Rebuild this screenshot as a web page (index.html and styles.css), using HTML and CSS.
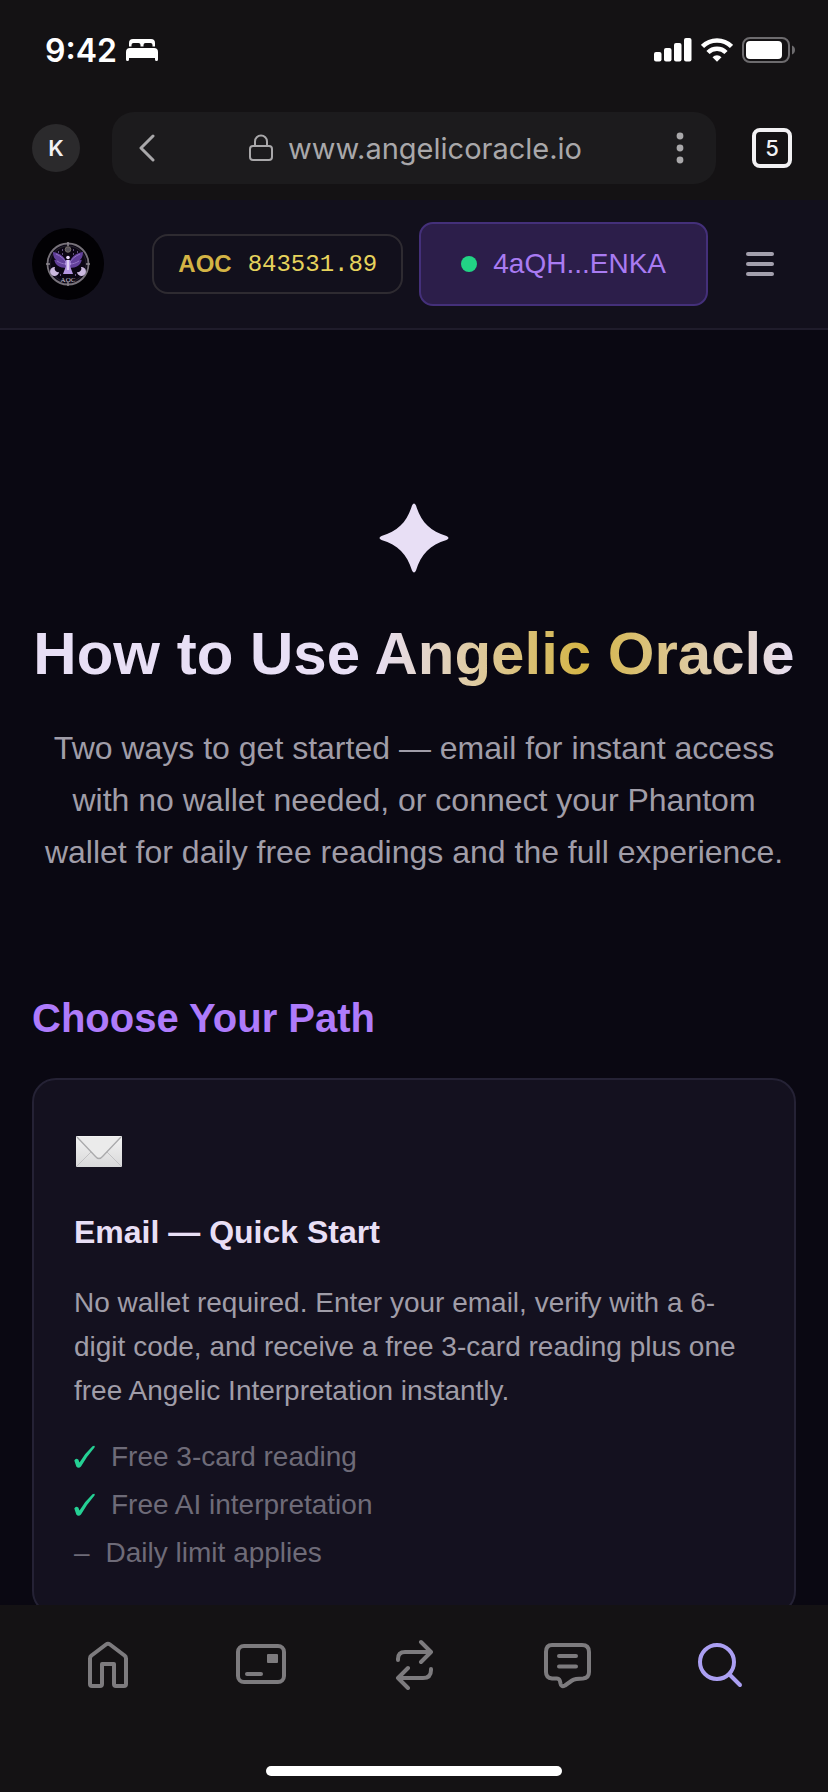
FILE: index.html
```html
<!DOCTYPE html>
<html lang="en">
<head>
    <meta charset="UTF-8">
    <meta name="viewport" content="width=device-width, initial-scale=1.0">
    <title>How to Use Angelic Oracle</title>
    <link rel="stylesheet" href="styles.css">
</head>
<body>
    <div class="status-bar">
        <div class="status-left">
            <span class="time">9:42</span>
            <svg width="32" height="22" viewBox="0 0 32 22" fill="#fff">
                <path d="M3 7.500V4a4 4 0 0 1 4-4h18a4 4 0 0 1 4 4v3.500h-2.500V6a2 2 0 0 0-2-2h-5a2 2 0 0 0-2 2v1.500h-3V6a2 2 0 0 0-2-2h-5a2 2 0 0 0-2 2v1.500z"/>
                <path d="M4 9h24a4 4 0 0 1 4 4v7.500a1.500 1.500 0 0 1-3 0V19H3v1.500a1.500 1.500 0 0 1-3 0V13a4 4 0 0 1 4-4z"/>
            </svg>
        </div>
        <div class="status-right">
            <svg width="38" height="24" viewBox="0 0 38 24" fill="#fff">
                <rect x="0" y="14" width="7.500" height="9.500" rx="2"/>
                <rect x="10" y="10" width="7.500" height="13.500" rx="2"/>
                <rect x="20" y="5" width="7.500" height="18.500" rx="2"/>
                <rect x="30" y="0" width="7.500" height="23.500" rx="2"/>
            </svg>
            <svg width="32" height="24" viewBox="0 0 32 24" fill="none" stroke="#fff" stroke-width="4.500">
                <path d="M1.500 8.500a20.500 20.500 0 0 1 29 0"/>
                <path d="M7 14.500a12.700 12.700 0 0 1 18 0"/>
                <path d="M11.500 19.200a6.400 6.400 0 0 1 9 0L16 23.800z" fill="#fff" stroke="none"/>
            </svg>
            <svg width="54" height="26" viewBox="0 0 54 26">
                <rect x="1" y="1" width="46" height="24" rx="7" fill="none" stroke="#6d6b6e" stroke-width="2"/>
                <rect x="4" y="4" width="36" height="18" rx="4" fill="#fff"/>
                <path d="M50 8.500c4 1.500 4 7.500 0 9z" fill="#6d6b6e"/>
            </svg>
        </div>
    </div>

    <div class="browser-bar">
        <button class="profile" aria-label="Profile">K</button>
        <div class="address">
            <button class="icon-btn" aria-label="Back">
                <svg width="16" height="28" viewBox="0 0 16 28" fill="none" stroke="#a9a8aa" stroke-width="3" stroke-linecap="round" stroke-linejoin="round"><path d="M14 2L2 14l12 12"/></svg>
            </button>
            <a class="url" href="#">
                <svg width="24" height="28" viewBox="0 0 24 28" fill="none" stroke="#a9a8aa" stroke-width="2">
                    <rect x="1" y="12" width="22" height="14" rx="3"/>
                    <path d="M6 12V7.500a6 6 0 0 1 12 0V12"/>
                </svg>
                <span>www.angelicoracle.io</span>
            </a>
            <button class="icon-btn" aria-label="More">
                <svg width="8" height="32" viewBox="0 0 8 32" fill="#a9a8aa"><circle cx="4" cy="4" r="3.400"/><circle cx="4" cy="16" r="3.400"/><circle cx="4" cy="28" r="3.400"/></svg>
            </button>
        </div>
        <button class="tabs" aria-label="Tabs">5</button>
    </div>

    <header class="site-header">
        <a class="logo" href="#" aria-label="Home">
            <svg width="72" height="72" viewBox="0 0 72 72">
                <circle cx="36" cy="36" r="36" fill="#020104"/>
                <circle cx="36" cy="36" r="20.500" fill="#0b0614" stroke="#77727a" stroke-width="1.800"/>
                <circle cx="36" cy="36" r="18" fill="none" stroke="#34303a" stroke-width="0.600"/>
                <path d="M36 14v4M36 54v4M14 36h4M54 36h4" stroke="#8d8890" stroke-width="1.500"/>
                <circle cx="36" cy="21.500" r="2.800" fill="#55505a" stroke="#807a70" stroke-width="0.800"/>
                <path d="M35 37c-1-7-6-12-14-13 0 4 1 6 3 8-1 0-2 0-2-1 1 6 5 9 13 9z" fill="#62409a"/>
                <path d="M37 37c1-7 6-12 14-13 0 4-1 6-3 8 1 0 2 0 2-1-1 6-5 9-13 9z" fill="#62409a"/>
                <path d="M34 34c-2-3-5-6-10-8M34 36c-3 0-6-1-9-3M38 34c2-3 5-6 10-8M38 36c3 0 6-1 9-3" fill="none" stroke="#9274c4" stroke-width="1"/>
                <circle cx="36" cy="29.500" r="1.800" fill="#eadcfb"/>
                <path d="M34 32h4l1 4-1 2 3 8H31l3-8-1-2z" fill="#b496e2"/>
                <path d="M36 32v10" stroke="#eee2fb" stroke-width="1.500"/>
                <path d="M23 39a4.500 4.500 0 1 0 4 5 3.500 3.500 0 0 1-4-5zM49 39a4.500 4.500 0 1 1-4 5 3.500 3.500 0 0 0 4-5z" fill="#cbb9df"/>
                <path d="M30 22h1M41 22h1M30 26h1M41 26h1M28 47h1M43 47h1M45 24h1M26 24h1" stroke="#b99ce0" stroke-width="1"/>
                <text class="logo-text" x="36" y="54" text-anchor="middle">AOC</text>
            </svg>
        </a>
        <div class="balance"><strong>AOC</strong><span class="amount">843531.89</span></div>
        <button class="wallet"><span class="dot"></span>4aQH...ENKA</button>
        <button class="menu" aria-label="Menu"><span></span><span></span><span></span></button>
    </header>

    <main class="content">
        <section class="hero">
            <svg class="star" width="72" height="72" viewBox="0 0 72 72" fill="#e8dff5">
                <path d="M34 3.500q2-4 4 0C43 20 52 29 68.500 34q4 2 0 4C52 43 43 52 38 68.500q-2 4-4 0C29 52 20 43 3.500 38q-4-2 0-4C20 29 29 20 34 3.500z"/>
            </svg>
            <h1>How to Use <span class="gold">Angelic Oracle</span></h1>
            <p>Two ways to get started — email for instant access with no wallet needed, or connect your Phantom wallet for daily free readings and the full experience.</p>
        </section>

        <section class="paths">
            <h2>Choose Your Path</h2>
            <article class="card">
                <svg class="envelope" width="48" height="32" viewBox="0 0 48 32">
                    <defs>
                        <linearGradient id="paper" x1="0" y1="0" x2="0" y2="1">
                            <stop offset="0" stop-color="#f3f3f3"/>
                            <stop offset="1" stop-color="#d9d9da"/>
                        </linearGradient>
                    </defs>
                    <rect x="2" y="0" width="46" height="31" rx="1" fill="url(#paper)"/>
                    <path d="M3 30l15-15M47 30L32 15" stroke="#c2c2c4" stroke-width="1"/>
                    <path d="M3 1l18 19q4 5 8 0L47 1" fill="#ebebeb" stroke="#aaaaac" stroke-width="1.300"/>
                </svg>
                <h3>Email — Quick Start</h3>
                <p>No wallet required. Enter your email, verify with a 6-digit code, and receive a free 3-card reading plus one free Angelic Interpretation instantly.</p>
                <ul>
                    <li>
                        <svg width="21" height="24" viewBox="0 0 21 24" fill="#25d094"><path d="M0.300 15.500q1.500-3 4-1l1.200 3Q11 8 18.500 1.200q3-1.400 2 1.300Q13 11 7 21.500q-2.500 2.500-4.700 0z"/></svg>
                        Free 3-card reading
                    </li>
                    <li>
                        <svg width="21" height="24" viewBox="0 0 21 24" fill="#25d094"><path d="M0.300 15.500q1.500-3 4-1l1.200 3Q11 8 18.500 1.200q3-1.400 2 1.300Q13 11 7 21.500q-2.500 2.500-4.700 0z"/></svg>
                        Free AI interpretation
                    </li>
                    <li><span>–</span>Daily limit applies</li>
                </ul>
            </article>
        </section>
    </main>

    <nav class="bottom-nav">
        <div class="nav-items">
            <a href="#" aria-label="Home">
                <svg width="52" height="52" viewBox="0 0 52 52"><path d="M8 46V20.500q0-2 1.500-3L24 6.500q2-1.500 4 0l14.500 11q1.500 1 1.500 3V46q0 2-2 2h-8q-2 0-2-2V26H20v20q0 2-2 2h-8q-2 0-2-2z"/></svg>
            </a>
            <a href="#" aria-label="Wallet">
                <svg width="52" height="52" viewBox="0 0 52 52"><rect x="3" y="8" width="46" height="36" rx="6"/><path d="M12 36h14"/><rect class="solid" x="32" y="16" width="11" height="9" rx="1"/></svg>
            </a>
            <a href="#" aria-label="Swap">
                <svg width="52" height="52" viewBox="0 0 52 52"><path d="M10 22v-1q0-7 7-7h26M33 4l10 10-10 10M43 31v1q0 8-8 8H10M20 30l-10 10 10 10"/></svg>
            </a>
            <a href="#" aria-label="Chat">
                <svg width="52" height="52" viewBox="0 0 52 52"><path d="M11 7h30q7 0 7 7v20q0 6-6 6.500-8 0-11 2l-7 5q-4 2-4.500-2-.5-5-3.500-5h-5q-6-.5-6-6.500V14q0-7 6-7zM18 18h17M18 28.500h17"/></svg>
            </a>
            <a class="active" href="#" aria-label="Search">
                <svg width="52" height="52" viewBox="0 0 52 52"><circle cx="23" cy="24" r="17"/><path d="M35.500 36.500L46 47"/></svg>
            </a>
        </div>
        <div class="home-indicator"></div>
    </nav>
</body>
</html>
```

FILE: styles.css
```css
* {
    box-sizing: border-box;
}

body {
    margin: 0;
    height: 100vh;
    display: flex;
    flex-direction: column;
    background: #0a0812;
    color: #e8dff5;
    font-family: "Liberation Sans", Arial, sans-serif;
}

svg {
    display: block;
    flex-shrink: 0;
}

button {
    border: none;
    padding: 0;
    background: none;
    color: inherit;
    font-family: inherit;
    cursor: pointer;
}

a {
    color: inherit;
    text-decoration: none;
}

h1, h2, h3, p, ul {
    margin: 0;
}

/* Phone status bar */
.status-bar {
    display: flex;
    justify-content: space-between;
    align-items: center;
    height: 100px;
    flex-shrink: 0;
    padding: 0 32px 0 45px;
    background: #141214;
    color: #fff;
}

.status-left, .status-right {
    display: flex;
    align-items: center;
    gap: 9px;
}

.time {
    font: 600 32px Inter, sans-serif;
}

/* Browser toolbar */
.browser-bar {
    display: flex;
    align-items: center;
    gap: 32px;
    flex-shrink: 0;
    height: 100px;
    padding: 12px 36px 16px 32px;
    background: #141214;
    font-family: Inter, sans-serif;
}

.profile {
    width: 48px;
    height: 48px;
    border-radius: 50%;
    background: #2b2a2c;
    color: #f2f1f3;
    font-size: 22px;
    font-weight: 600;
}

.address {
    flex: 1;
    display: flex;
    justify-content: space-between;
    align-items: center;
    height: 72px;
    margin-right: 4px;
    padding: 0 32px 0 27px;
    border-radius: 22px;
    background: #1c1b1d;
    color: #a9a8aa;
}

.url {
    display: flex;
    align-items: center;
    gap: 15px;
    font-size: 29px;
}

.tabs {
    width: 40px;
    height: 40px;
    border: 4px solid #f2f1f3;
    border-radius: 8px;
    color: #f2f1f3;
    font-size: 22px;
    font-weight: 500;
}

/* Site header */
.site-header {
    display: flex;
    align-items: center;
    flex-shrink: 0;
    height: 130px;
    padding: 0 54px 0 32px;
    border-bottom: 2px solid #1f1c2b;
    background: #12101c;
}

.logo-text {
    fill: #c9c3cf;
    font: 7px "Liberation Serif", serif;
}

.balance {
    display: flex;
    align-items: center;
    gap: 16px;
    height: 60px;
    margin-left: auto;
    padding: 0 24px;
    border: 2px solid #2e2b31;
    border-radius: 16px;
    color: #d4b445;
    font-size: 24px;
}

.amount {
    color: #e6d35c;
    font-family: "Liberation Mono", monospace;
}

.wallet {
    display: flex;
    align-items: center;
    gap: 16px;
    height: 84px;
    margin-left: 16px;
    padding: 0 40px;
    border: 2px solid #44307a;
    border-radius: 14px;
    background: #2c1e4a;
    color: #a97bf2;
    font-size: 28px;
}

.dot {
    width: 16px;
    height: 16px;
    border-radius: 50%;
    background: #22d385;
}

.menu {
    display: flex;
    flex-direction: column;
    gap: 6px;
    margin-left: 38px;
}

.menu span {
    width: 28px;
    height: 4px;
    border-radius: 2px;
    background: #a3a0ad;
}

/* Page content */
.content {
    flex: 1;
    min-height: 0;
    overflow: hidden;
    padding: 172px 32px 0;
}

.hero {
    text-align: center;
}

.star {
    margin: 0 auto;
}

h1 {
    margin-top: 44px;
    font-size: 60px;
    line-height: 72px;
    white-space: nowrap;
}

.gold {
    background: linear-gradient(90deg, #e8dff5, #d4b445, #e8dff5);
    background-clip: text;
    -webkit-background-clip: text;
    color: transparent;
}

.hero p {
    margin-top: 32px;
    color: #a09da8;
    font-size: 32px;
    line-height: 52px;
}

.paths {
    margin-top: 116px;
}

h2 {
    color: #ae7bfb;
    font-size: 40px;
    line-height: 48px;
}

.card {
    margin-top: 36px;
    padding: 56px 40px 36px;
    border: 2px solid #252235;
    border-radius: 24px;
    background: #14111f;
}

h3 {
    margin-top: 44px;
    font-size: 32px;
    line-height: 40px;
}

.card p {
    margin-top: 29px;
    color: #a09da8;
    font-size: 28px;
    line-height: 44px;
}

.card ul {
    margin-top: 20px;
    padding: 0;
    list-style: none;
}

.card li {
    display: flex;
    align-items: center;
    gap: 16px;
    color: #6e6b78;
    font-size: 28px;
    line-height: 48px;
}

/* Bottom navigation */
.bottom-nav {
    flex-shrink: 0;
    padding: 33px 32px 16px;
    background: #141214;
}

.nav-items {
    display: flex;
}

.nav-items a {
    flex: 1;
    display: flex;
    justify-content: center;
}

.nav-items svg {
    fill: none;
    stroke: #7d7b7e;
    stroke-width: 4;
    stroke-linecap: round;
    stroke-linejoin: round;
}

.nav-items .solid {
    fill: #7d7b7e;
    stroke: none;
}

.nav-items .active svg {
    stroke: #ab9ff2;
}

.home-indicator {
    width: 296px;
    height: 10px;
    margin: 76px auto 0;
    border-radius: 5px;
    background: #fff;
}
```
